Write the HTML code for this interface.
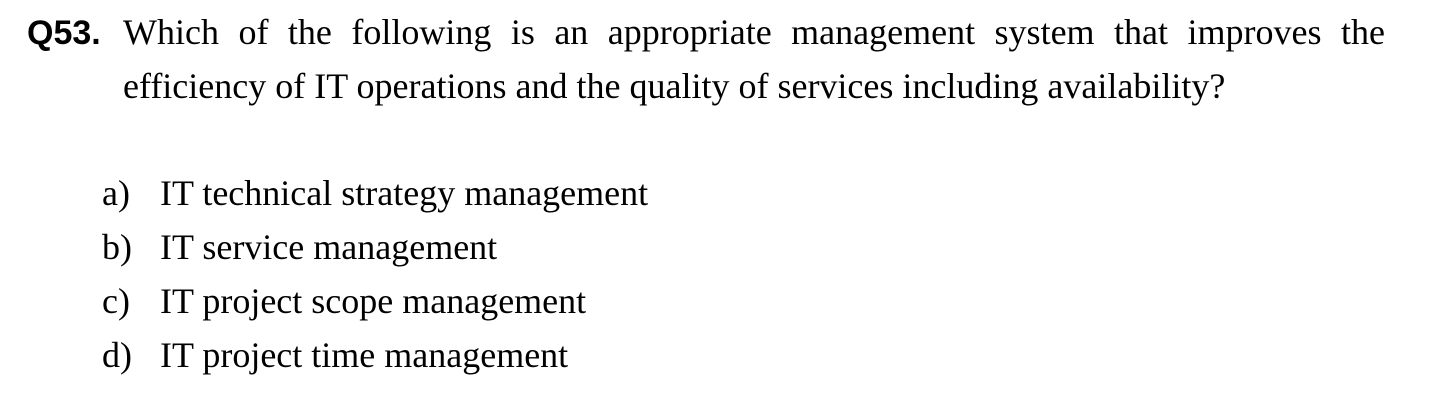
<!DOCTYPE html>
<html><head><style>
html,body{margin:0;padding:0;background:#fff;width:1450px;height:404px;overflow:hidden;}
body{position:relative;font-family:"Liberation Serif",serif;color:#000;}
.q{position:absolute;left:27px;top:14px;font-family:"Liberation Sans",sans-serif;font-weight:bold;font-size:34px;}
.l1{position:absolute;left:123px;top:11px;width:1262px;font-size:36px;white-space:nowrap;display:flex;justify-content:space-between;}
.l2{position:absolute;left:123px;top:65px;font-size:36px;white-space:nowrap;}
.o{position:absolute;font-size:36px;}
.o span{position:absolute;left:0}
.o b{font-weight:normal;position:absolute;left:58px;white-space:nowrap}
</style></head><body>
<div class="q">Q53.</div>
<div class="l1"><span>Which</span><span>of</span><span>the</span><span>following</span><span>is</span><span>an</span><span>appropriate</span><span>management</span><span>system</span><span>that</span><span>improves</span><span>the</span></div>
<div class="l2">efficiency of IT operations and the quality of services including availability?</div>
<div class="o" style="left:102px;top:172px"><span>a)</span><b>IT technical strategy management</b></div>
<div class="o" style="left:102px;top:226px"><span>b)</span><b>IT service management</b></div>
<div class="o" style="left:102px;top:280px"><span>c)</span><b>IT project scope management</b></div>
<div class="o" style="left:102px;top:334px"><span>d)</span><b>IT project time management</b></div>
</body></html>
